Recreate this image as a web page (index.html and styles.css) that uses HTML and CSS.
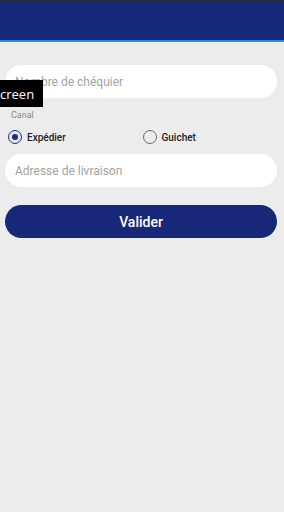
FILE: index.html
```html
<!DOCTYPE html>
<html>
<head>
  <meta charset="utf-8">
  <title>Chéquier</title>
  <link rel="stylesheet" href="styles.css">
</head>
<body>
<div id="container">

  <div id="top_bar"></div>

  <div id="form">
    <div class="field">
      <input type="text" placeholder="Nombre de chéquier">
    </div>

    <div class="label">Canal</div>
    <div class="radios">
      <label class="radio"><span class="dot checked"></span>Expédier</label>
      <label class="radio"><span class="dot"></span>Guichet</label>
    </div>

    <div class="field">
      <input type="text" placeholder="Adresse de livraison">
    </div>

    <button class="submit">Valider</button>
  </div>

  <div class="tip">creen</div>
</div>
</body>
</html>
```

FILE: styles.css
```css
html, body {
  height: 100%;
  margin: 0;
}
body {
  background-color: #ececec;
  font-family: Roboto, "Liberation Sans", sans-serif;
  overflow: hidden;
}

#container {
  position: relative;
  height: 100%;
  width: 100%;
}

#top_bar {
  height: 38px;
  background: #172879;
  border-top: 2px solid #2b2b2b;
  border-bottom: 2px solid #1b8cf5;
  box-shadow: 0 1px 0 #f6f6f6;
}

#form {
  padding: 23px 7px 0 5px;
}

.field input {
  display: block;
  box-sizing: border-box;
  width: 100%;
  height: 33px;
  border: none;
  border-radius: 17px;
  background: #fff;
  padding: 0 10px;
  font-family: inherit;
  font-size: 12px;
  outline: none;
}
.field input::placeholder {
  color: #a3a3a3;
}

.label {
  margin: 12px 0 0 6px;
  font-size: 9px;
  color: #8a8a8a;
}

.radios {
  display: flex;
  height: 20px;
  align-items: center;
  margin: 7px 0 7px 3px;
}
.radio {
  display: flex;
  align-items: center;
  width: 137px;
  font-size: 10px;
  font-weight: 500;
  color: #222;
}
.dot {
  box-sizing: border-box;
  width: 14px;
  height: 14px;
  border: 1.5px solid #6b6b6b;
  border-radius: 50%;
  margin-right: 5px;
  position: relative;
}
.dot.checked {
  border-color: #1c2a8a;
}
.dot.checked::after {
  content: "";
  position: absolute;
  left: 2.5px;
  top: 2.5px;
  width: 6px;
  height: 6px;
  border-radius: 50%;
  background: #1c2a8a;
}

.submit {
  display: block;
  width: 100%;
  height: 33px;
  margin-top: 18px;
  border: none;
  border-radius: 17px;
  background: #172879;
  color: #fff;
  font-family: inherit;
  font-size: 14px;
  font-weight: 500;
}

.tip {
  position: absolute;
  left: 0;
  top: 80px;
  width: 43px;
  height: 27px;
  box-sizing: border-box;
  padding-top: 5px;
  background: #000;
  color: #fff;
  font-family: "Open Sans", sans-serif;
  font-size: 13px;
}
```
